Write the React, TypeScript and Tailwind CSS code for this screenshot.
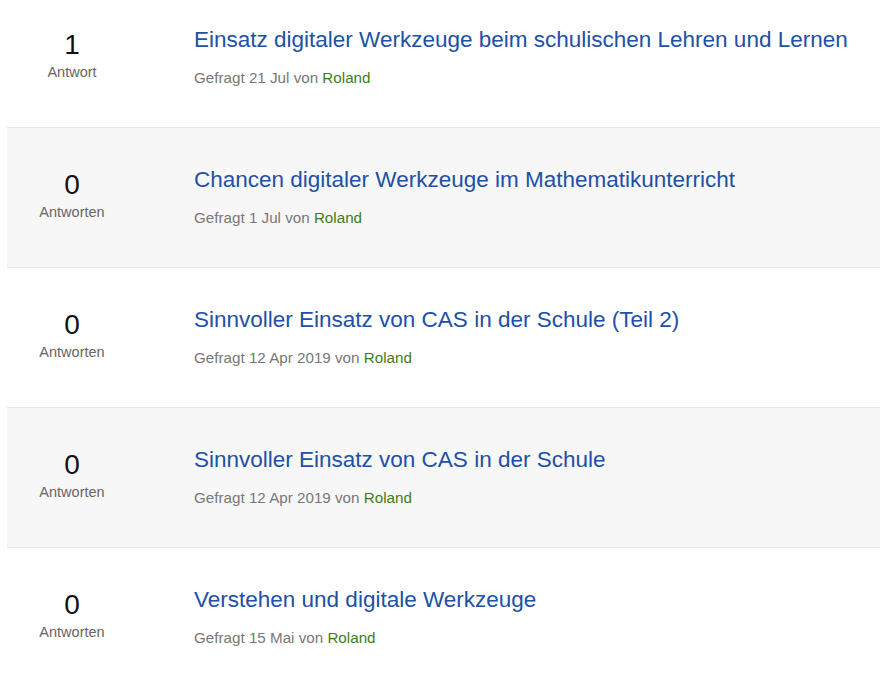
type Question = {
  id: number
  count: number
  title: string
  date: string
  author: string
}

const questions: Question[] = [
  { id: 1, count: 1, title: 'Einsatz digitaler Werkzeuge beim schulischen Lehren und Lernen', date: '21 Jul', author: 'Roland' },
  { id: 2, count: 0, title: 'Chancen digitaler Werkzeuge im Mathematikunterricht', date: '1 Jul', author: 'Roland' },
  { id: 3, count: 0, title: 'Sinnvoller Einsatz von CAS in der Schule (Teil 2)', date: '12 Apr 2019', author: 'Roland' },
  { id: 4, count: 0, title: 'Sinnvoller Einsatz von CAS in der Schule', date: '12 Apr 2019', author: 'Roland' },
  { id: 5, count: 0, title: 'Verstehen und digitale Werkzeuge', date: '15 Mai', author: 'Roland' },
]

export default function App() {
  return (
    <div className="min-h-[675px] bg-white font-['Liberation_Sans',Arial,sans-serif] overflow-hidden">
      <div className="ml-[7px] -mt-[12px]">
        {questions.map((q, i) => (
          <div
            key={q.id}
            className={`flex h-[140px] border-b border-[#e6e6e6] pt-[38px] ${
              i % 2 === 1 ? 'bg-[#f7f7f7]' : 'bg-white'
            }`}
          >
            <div className="w-[130px] pt-[3px] flex flex-col items-center">
              <span className="text-[28px] leading-[32px] text-[#111]">{q.count}</span>
              <span className="mt-[2px] text-[14.5px] leading-[18px] text-[#666]">
                {q.count === 1 ? 'Antwort' : 'Antworten'}
              </span>
            </div>
            <div className="ml-[57px] flex flex-col">
              <a href="#" className="text-[22.5px] leading-[28px] text-[#2150a6] hover:underline">
                {q.title}
              </a>
              <p className="mt-[14px] text-[15.2px] leading-[20px] text-[#777]">
                Gefragt {q.date} von <span className="text-[#3f7d20]">{q.author}</span>
              </p>
            </div>
          </div>
        ))}
      </div>
    </div>
  )
}
